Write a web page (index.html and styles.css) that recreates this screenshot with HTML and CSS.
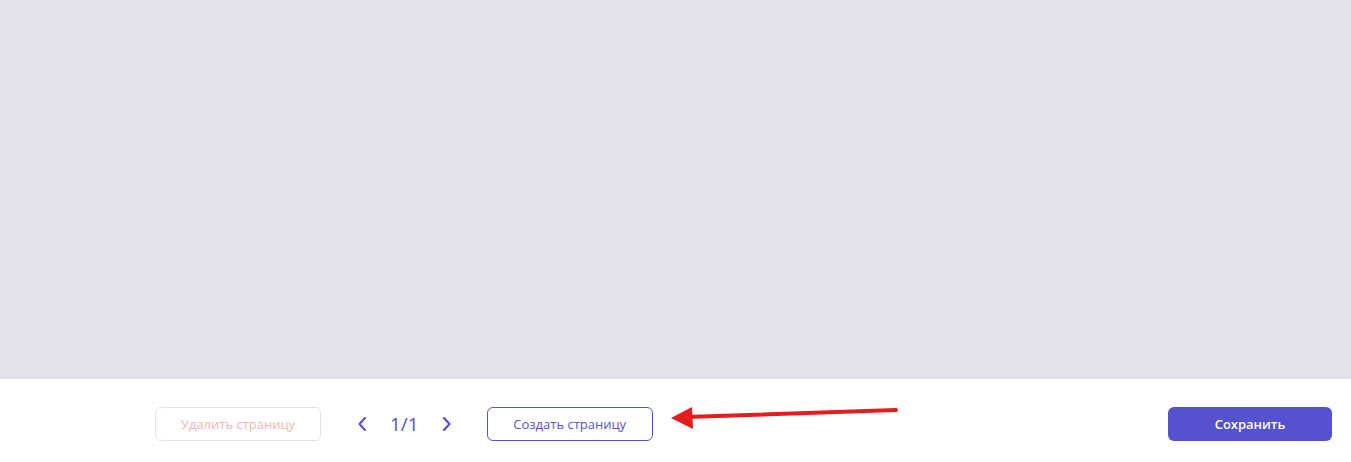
FILE: index.html
```html
<!DOCTYPE html>
<html lang="ru">
<head>
<meta charset="utf-8">
<title>Редактор</title>
<link rel="stylesheet" href="styles.css">
</head>
<body>
<div class="page">
  <div class="canvas"></div>
  <div class="footer">
    <div class="left">
      <button class="btn btn-delete">Удалить страницу</button>
      <div class="pager">
        <span class="chev">
          <svg width="10" height="16" viewBox="0 0 10 16"><path d="M8 2 L2.5 8 L8 14" fill="none" stroke="#5552d0" stroke-width="2.2" stroke-linecap="round" stroke-linejoin="round"/></svg>
        </span>
        <span class="count">1/1</span>
        <span class="chev">
          <svg width="10" height="16" viewBox="0 0 10 16"><path d="M2 2 L7.5 8 L2 14" fill="none" stroke="#5552d0" stroke-width="2.2" stroke-linecap="round" stroke-linejoin="round"/></svg>
        </span>
      </div>
      <button class="btn btn-create">Создать страницу</button>
    </div>
    <button class="btn btn-save">Сохранить</button>
    <svg class="arrow" width="240" height="40" viewBox="0 0 240 40">
      <path d="M226 4 L16 11" stroke="#e41c1c" stroke-width="4" stroke-linecap="round" fill="none"/>
      <path d="M1 12 L22 1 L23 23 Z" fill="#e41c1c"/>
    </svg>
  </div>
</div>
</body>
</html>
```
FILE: styles.css
```css
* { box-sizing: border-box; }
html, body { margin: 0; padding: 0; }
body {
  font-family: "Open Sans", "Liberation Sans", sans-serif;
  background: #ffffff;
}
.page {
  width: 1351px;
  height: 462px;
  display: flex;
  flex-direction: column;
}
.canvas {
  height: 379px;
  background: #e3e3ee;
}
.footer {
  position: relative;
  flex: 1;
  display: flex;
  justify-content: space-between;
  align-items: flex-start;
  padding: 28px 19px 0 155px;
}
.left {
  display: flex;
  align-items: center;
}
.btn {
  font-family: inherit;
  font-size: 13px;
  height: 34px;
  border-radius: 6px;
  padding: 0;
  background: #fff;
  cursor: pointer;
}
.btn-delete {
  width: 166px;
  border: 1px solid #e4e2ef;
  color: #f1b7b5;
}
.pager {
  display: flex;
  align-items: center;
  margin-left: 36px;
  margin-right: 35px;
}
.chev {
  display: flex;
  width: 10px;
  height: 16px;
}
.count {
  font-size: 19px;
  color: #5552d0;
  margin: 0 23px 0 23px;
  line-height: 24px;
}
.btn-create {
  width: 166px;
  border: 1px solid #5552d0;
  color: #5552d0;
}
.btn-save {
  width: 164px;
  border: none;
  background: #5552d0;
  color: #fff;
  font-weight: 600;
}
.arrow {
  position: absolute;
  left: 670px;
  top: 27px;
}
```
